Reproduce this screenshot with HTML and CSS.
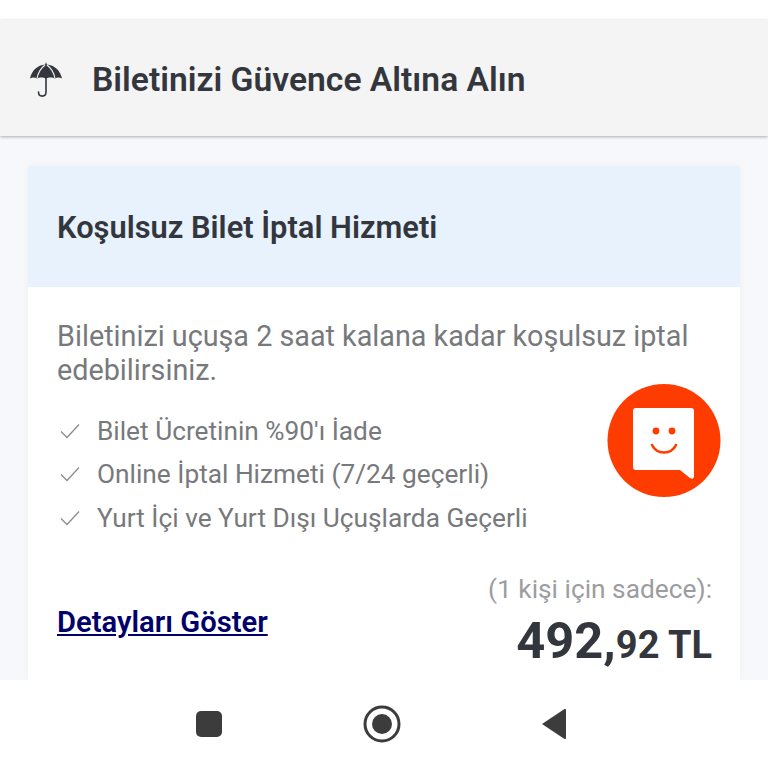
FILE: index.html
```html
<!DOCTYPE html>
<html lang="tr">
<head>
<meta charset="utf-8">
<title>Biletinizi Güvence Altına Alın</title>
<link rel="stylesheet" href="styles.css">
</head>
<body>
<div class="screen">
  <header class="topbar">
    <svg class="umbrella" viewBox="0 0 32 36" width="32" height="36" aria-hidden="true">
      <path d="M16 0 L16.8 2.4 C24.5 3 30.5 8.6 32 16.5 C29.6 15 27 15 25 16.5 C23 15 18.5 15 16 16.5 C13.5 15 9 15 7 16.5 C5 15 2.4 15 0 16.5 C1.5 8.6 7.5 3 15.2 2.4 Z" fill="#33373d"/>
      <path d="M15 3 C11 6 8 11 7 16.5 M17 3 C21 6 24 11 25 16.5" fill="none" stroke="#f4f4f4" stroke-width="1.2"/>
      <path d="M16 16 V30 C16 35.5 8.5 35.5 8.5 30" fill="none" stroke="#33373d" stroke-width="1.6" stroke-linecap="round"/>
    </svg>
    <h1 class="topbar-title">Biletinizi Güvence Altına Alın</h1>
  </header>
  <main class="content">
    <section class="card">
      <div class="card-head">
        <h2 class="card-title">Koşulsuz Bilet İptal Hizmeti</h2>
      </div>
      <div class="card-body">
        <p class="intro">Biletinizi uçuşa 2 saat kalana kadar koşulsuz iptal edebilirsiniz.</p>
        <div class="benefits-row">
          <ul class="benefits">
            <li class="benefit">
              <svg class="check" viewBox="0 0 20 16" width="20" height="16" aria-hidden="true"><path d="M1 8.5 L7 14.5 L19 1.5" fill="none" stroke="#8a8c8f" stroke-width="1.3"/></svg>
              <span>Bilet Ücretinin %90'ı İade</span>
            </li>
            <li class="benefit">
              <svg class="check" viewBox="0 0 20 16" width="20" height="16" aria-hidden="true"><path d="M1 8.5 L7 14.5 L19 1.5" fill="none" stroke="#8a8c8f" stroke-width="1.3"/></svg>
              <span>Online İptal Hizmeti (7/24 geçerli)</span>
            </li>
            <li class="benefit">
              <svg class="check" viewBox="0 0 20 16" width="20" height="16" aria-hidden="true"><path d="M1 8.5 L7 14.5 L19 1.5" fill="none" stroke="#8a8c8f" stroke-width="1.3"/></svg>
              <span>Yurt İçi ve Yurt Dışı Uçuşlarda Geçerli</span>
            </li>
          </ul>
          <svg class="badge" viewBox="0 0 114 114" width="114" height="114" aria-hidden="true">
            <circle cx="57" cy="56.5" r="56.5" fill="#ff3c00"/>
            <path d="M29 24 H84 Q87 24 87 27 V92 Q87 96 83 94 L73 86 H29 Q26 86 26 83 V27 Q26 24 29 24 Z" fill="#fff"/>
            <circle cx="49" cy="47" r="3.4" fill="#ff3c00"/>
            <circle cx="65" cy="47" r="3.4" fill="#ff3c00"/>
            <path d="M45 61 C50 71 64 71 69 61" fill="none" stroke="#ff3c00" stroke-width="2.6" stroke-linecap="round"/>
          </svg>
        </div>
        <div class="foot">
          <a class="details" href="#">Detayları Göster</a>
          <div class="price-box">
            <div class="price-note">(1 kişi için sadece):</div>
            <div class="price"><span class="price-main">492,</span><span class="price-sub">92 TL</span></div>
          </div>
        </div>
      </div>
    </section>
  </main>
  <nav class="navbar">
    <svg viewBox="0 0 28 28" width="28" height="28" aria-hidden="true"><rect x="1" y="1" width="26" height="26" rx="5" fill="#3c3c3c"/></svg>
    <svg viewBox="0 0 38 38" width="38" height="38" aria-hidden="true"><circle cx="19" cy="19" r="17" fill="none" stroke="#3c3c3c" stroke-width="3"/><circle cx="19" cy="19" r="10" fill="#3c3c3c"/></svg>
    <svg viewBox="0 0 26 32" width="26" height="32" aria-hidden="true"><path d="M1 16 L23.5 1 Q25 0.5 25 2 V30 Q25 31.5 23.5 31 Z" fill="#3c3c3c"/></svg>
  </nav>
</div>
</body>
</html>
```
FILE: styles.css
```css
* { box-sizing: border-box; }
html, body { margin: 0; padding: 0; }
body {
  font-family: Roboto, "Liberation Sans", sans-serif;
  background: #fff;
}
.screen {
  width: 768px;
  height: 768px;
  display: flex;
  flex-direction: column;
  overflow: hidden;
  padding-top: 20px;
}
.topbar {
  flex: none;
  height: 116px;
  background: #f4f4f4;
  box-shadow: 0 1px 3px rgba(0, 0, 0, 0.3);
  display: flex;
  align-items: center;
  padding-left: 30px;
  position: relative;
}
.umbrella { flex: none; margin-right: 30px; margin-top: 3px; }
.topbar-title {
  margin: 2px 0 0;
  font-size: 33.65px;
  font-weight: 600;
  color: #33373d;
}
.content {
  flex: 1;
  min-height: 0;
  background: #f7f8fb;
  padding: 30px 28px 0;
  overflow: hidden;
}
.card {
  background: #fff;
  height: 100%;
  box-shadow: 0 0 6px rgba(220, 225, 235, 0.35);
}
.card-head {
  height: 121px;
  background: #e8f2fd;
  display: flex;
  align-items: center;
  padding-left: 29px;
}
.card-title {
  margin: 2px 0 0;
  font-size: 30.85px;
  font-weight: 600;
  color: #33373d;
}
.card-body { padding: 32px 28px 0 29px; }
.intro {
  margin: 0;
  font-size: 28.75px;
  line-height: 34px;
  color: #77797c;
}
.benefits-row {
  display: flex;
  justify-content: space-between;
  align-items: flex-start;
  margin-top: -3px;
}
.benefits { list-style: none; margin: 25px 0 0; padding: 0; }
.benefit {
  display: flex;
  align-items: center;
  gap: 17px;
  height: 43.5px;
  font-size: 26.25px;
  color: #77797c;
  white-space: nowrap;
}
.check { flex: none; margin-left: 3px; }
.badge { flex: none; margin: 0 -9px 0 0; }
.foot {
  display: flex;
  justify-content: space-between;
  align-items: flex-start;
  margin-top: 34px;
}
.details {
  font-size: 29.2px;
  font-weight: 600;
  color: #00006b;
  margin-top: 31px;
}
.price-box { text-align: right; }
.price-note {
  font-size: 26.3px;
  line-height: 30px;
  color: #9c9d9f;
}
.price { color: #33373d; font-weight: 700; line-height: 62px; margin-top: 6px; }
.price-main { font-size: 50.6px; }
.price-sub { font-size: 38px; }
.navbar {
  flex: none;
  height: 88px;
  background: #fff;
  display: flex;
  align-items: center;
  gap: 140px;
  padding-left: 195px;
}
```
